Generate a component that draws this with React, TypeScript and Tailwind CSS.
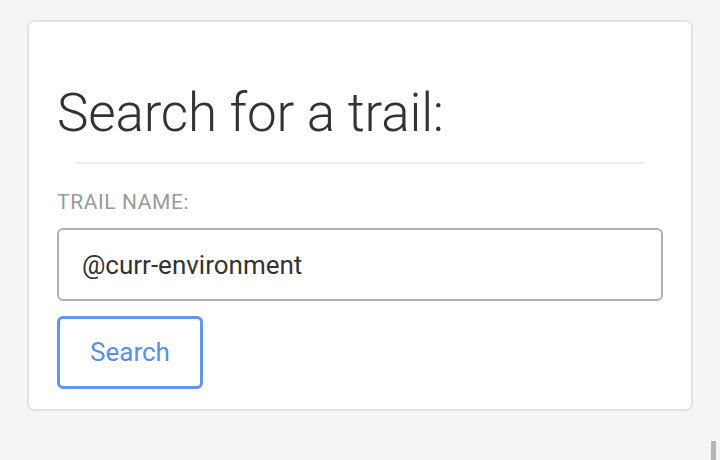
export default function App() {
  return (
    <div
      className="relative min-h-[460px] w-full bg-[#f5f5f5] pt-[20px] pl-[27px] pr-[27px]"
      style={{ fontFamily: "Roboto, 'Liberation Sans', sans-serif" }}
    >
      <div className="w-[666px] h-[391px] rounded-[7px] border-2 border-[#e2e2e2] bg-white px-[28px] pt-[60px]">
        <h1 className="text-[53px] leading-[62px] font-light text-[#333] tracking-[-0.2px]">
          Search for a trail:
        </h1>
        <div className="mx-[18px] mt-[18px] h-[2px] bg-[#ececec]" />
        <label className="mt-[27px] block text-[21px] leading-[22px] uppercase text-[#9a9a9a] tracking-[0.6px]">
          Trail name:
        </label>
        <input
          readOnly
          value="@curr-environment"
          className="mt-[15px] block h-[73px] w-full rounded-[6px] border-2 border-[#b0b0b0] px-[23px] text-[26px] text-[#333] outline-none"
        />
        <button className="mt-[15px] h-[73px] w-[146px] rounded-[6px] border-[3px] border-[#6495ed] text-[26px] text-[#5b8ee6]">
          Search
        </button>
      </div>
      <div className="absolute right-[4px] bottom-0 h-[19px] w-[5px] bg-[#b5b5b5]" />
    </div>
  );
}
